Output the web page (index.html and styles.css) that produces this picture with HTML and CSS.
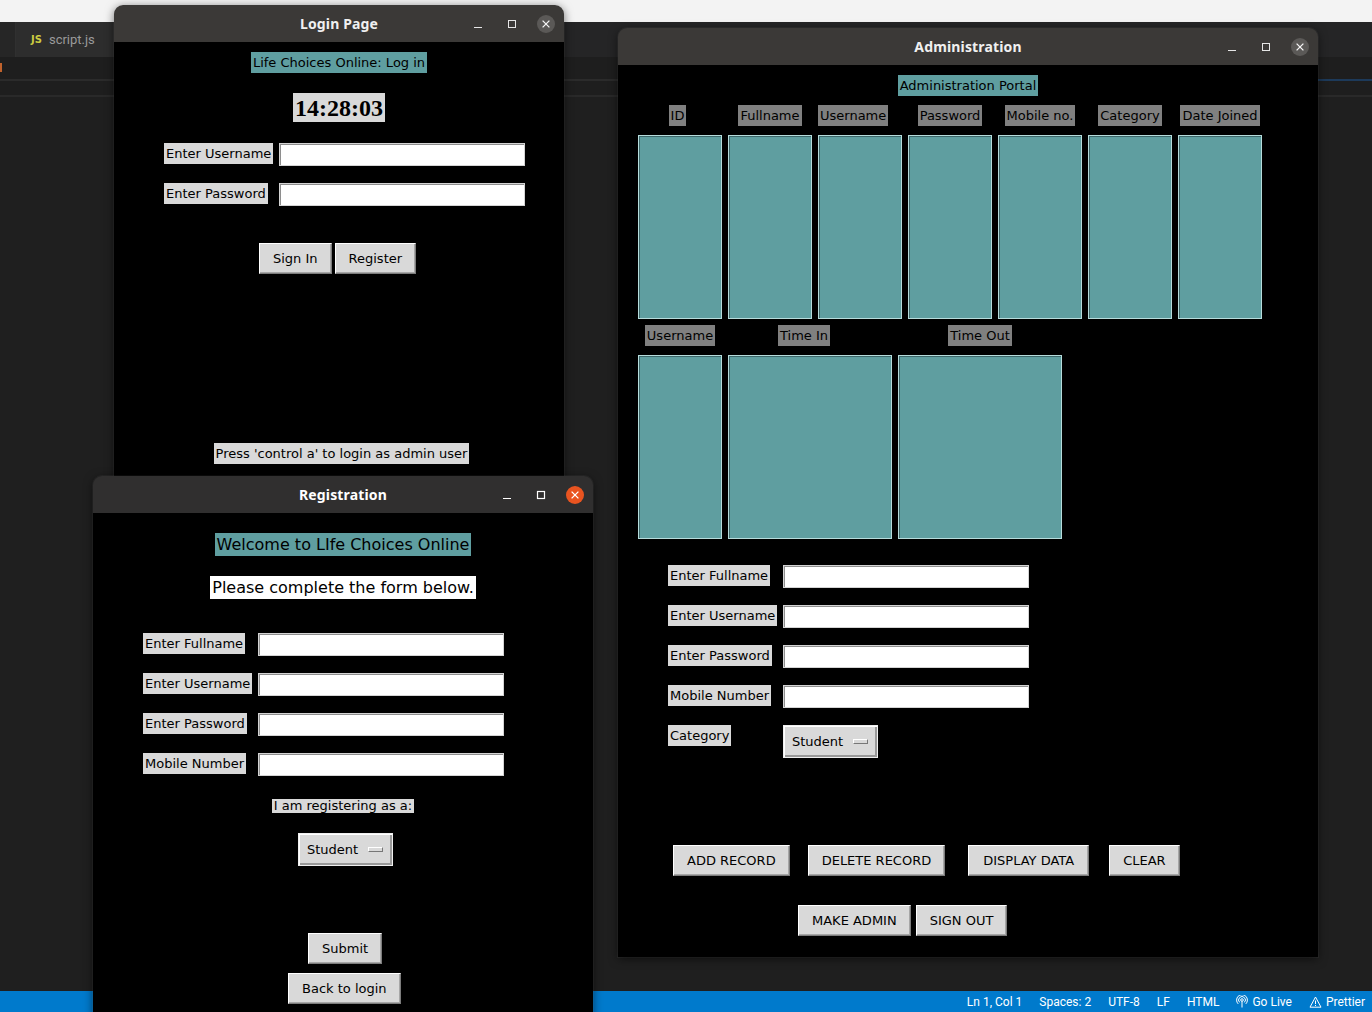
FILE: index.html
```html
<!DOCTYPE html>
<html lang="en">
<head>
<meta charset="utf-8">
<title>Life Choices Online</title>
<link rel="stylesheet" href="styles.css">
</head>
<body>
<div class="screen">
  <div class="topstrip"></div>
  <div class="tabbar">
    <div class="tab-lead"></div>
    <div class="tab"><span class="js">JS</span><span class="tabname">script.js</span></div>
  </div>
  <div class="crumbs"><span class="dirty"></span></div>
  <div class="rule"></div>
  <div class="crumbs2"></div>
  <div class="rule rule2"></div>
  <div class="editor"></div>
  <div class="statusbar">
    <span>Ln 1, Col 1</span>
    <span>Spaces: 2</span>
    <span>UTF-8</span>
    <span>LF</span>
    <span>HTML</span>
    <span class="sb-icon"><svg width="12" height="13" viewBox="0 0 12 13" fill="none" stroke="#fff" stroke-width="1"><circle cx="6" cy="5" r="1.3"/><path d="M3.6 7.4a3.4 3.4 0 1 1 4.8 0"/><path d="M2.2 8.9a5.4 5.4 0 1 1 7.6 0"/><path d="M6 6.3v6.2"/></svg>Go Live</span>
    <span class="sb-icon"><svg width="13" height="12" viewBox="0 0 13 12" fill="none" stroke="#fff" stroke-width="1"><path d="M6.5 1 L12 11.2 H1 Z"/><path d="M6.5 4.5v3.6M6.5 9v1"/></svg>Prettier</span>
  </div>

  <section class="window win-login">
    <header class="titlebar">
      <span></span>
      <h1 class="wtitle">Login Page</h1>
      <div class="controls">
        <svg class="ctl" viewBox="0 0 24 24"><path d="M8 15.5H16" stroke="#e6e6e6" stroke-width="1"/></svg>
        <svg class="ctl" viewBox="0 0 24 24"><rect x="8.5" y="8.5" width="7" height="7" fill="none" stroke="#e6e6e6" stroke-width="1"/></svg>
        <svg class="ctl" viewBox="0 0 24 24"><circle cx="12" cy="12" r="9" fill="#5b5957"/><path d="M8.6 8.6L15.4 15.4M15.4 8.6L8.6 15.4" stroke="#f2f2f2" stroke-width="1.3"/></svg>
      </div>
    </header>
    <div class="content login-content">
      <div class="lbl teal mt10">Life Choices Online: Log in</div>
      <div class="clock">14:28:03</div>
      <div class="frow mt21">
        <div class="lbl">Enter Username</div>
        <div class="entry"></div>
      </div>
      <div class="frow mt17">
        <div class="lbl">Enter Password</div>
        <div class="entry"></div>
      </div>
      <div class="login-btns">
        <button class="btn">Sign In</button>
        <button class="btn">Register</button>
      </div>
      <div class="lbl press">Press 'control a' to login as admin user</div>
    </div>
  </section>

  <section class="window win-admin">
    <header class="titlebar">
      <span></span>
      <h1 class="wtitle">Administration</h1>
      <div class="controls">
        <svg class="ctl" viewBox="0 0 24 24"><path d="M8 15.5H16" stroke="#e6e6e6" stroke-width="1"/></svg>
        <svg class="ctl" viewBox="0 0 24 24"><rect x="8.5" y="8.5" width="7" height="7" fill="none" stroke="#e6e6e6" stroke-width="1"/></svg>
        <svg class="ctl" viewBox="0 0 24 24"><circle cx="12" cy="12" r="9" fill="#5b5957"/><path d="M8.6 8.6L15.4 15.4M15.4 8.6L8.6 15.4" stroke="#f2f2f2" stroke-width="1.3"/></svg>
      </div>
    </header>
    <div class="content admin-content">
      <div class="lbl teal mt10">Administration Portal</div>
      <div class="cols7 mt9">
        <div class="lbl gray idh">ID</div>
        <div class="lbl gray">Fullname</div>
        <div class="lbl gray start">Username</div>
        <div class="lbl gray">Password</div>
        <div class="lbl gray">Mobile no.</div>
        <div class="lbl gray">Category</div>
        <div class="lbl gray">Date Joined</div>
      </div>
      <div class="cols7 mt9">
        <div class="lb"></div><div class="lb"></div><div class="lb"></div><div class="lb"></div><div class="lb"></div><div class="lb"></div><div class="lb"></div>
      </div>
      <div class="cols3 mt6">
        <div class="lbl gray">Username</div>
        <div class="lbl gray timein">Time In</div>
        <div class="lbl gray">Time Out</div>
      </div>
      <div class="cols3 mt9">
        <div class="lb"></div><div class="lb"></div><div class="lb"></div>
      </div>
      <div class="frow mt26">
        <div class="lbl">Enter Fullname</div>
        <div class="entry"></div>
      </div>
      <div class="frow mt17">
        <div class="lbl">Enter Username</div>
        <div class="entry"></div>
      </div>
      <div class="frow mt17">
        <div class="lbl">Enter Password</div>
        <div class="entry"></div>
      </div>
      <div class="frow mt17">
        <div class="lbl">Mobile Number</div>
        <div class="entry"></div>
      </div>
      <div class="frow mt17">
        <div class="lbl">Category</div>
        <div class="optmenu"><span>Student</span><span class="ind"></span></div>
      </div>
      <div class="admin-btns1">
        <button class="btn">ADD RECORD</button>
        <button class="btn">DELETE RECORD</button>
        <button class="btn wide-gap">DISPLAY DATA</button>
        <button class="btn clear">CLEAR</button>
      </div>
      <div class="admin-btns2">
        <button class="btn">MAKE ADMIN</button>
        <button class="btn">SIGN OUT</button>
      </div>
    </div>
  </section>

  <section class="window win-reg active">
    <header class="titlebar">
      <span></span>
      <h1 class="wtitle">Registration</h1>
      <div class="controls">
        <svg class="ctl" viewBox="0 0 24 24"><path d="M8 15.5H16" stroke="#ffffff" stroke-width="1.2"/></svg>
        <svg class="ctl" viewBox="0 0 24 24"><rect x="8.5" y="8.5" width="7" height="7" fill="none" stroke="#ffffff" stroke-width="1.2"/></svg>
        <svg class="ctl" viewBox="0 0 24 24"><circle cx="12" cy="12" r="9" fill="#e95420"/><path d="M8.6 8.6L15.4 15.4M15.4 8.6L8.6 15.4" stroke="#ffffff" stroke-width="1.3"/></svg>
      </div>
    </header>
    <div class="content reg-content">
      <div class="lbl teal big mt20">Welcome to LIfe Choices Online</div>
      <div class="lbl white big mt20">Please complete the form below.</div>
      <div class="frow mt34">
        <div class="lbl">Enter Fullname</div>
        <div class="entry"></div>
      </div>
      <div class="frow mt17">
        <div class="lbl">Enter Username</div>
        <div class="entry"></div>
      </div>
      <div class="frow mt17">
        <div class="lbl">Enter Password</div>
        <div class="entry"></div>
      </div>
      <div class="frow mt17">
        <div class="lbl">Mobile Number</div>
        <div class="entry"></div>
      </div>
      <div class="lbl small">I am registering as a:</div>
      <div class="optmenu reg-opt"><span>Student</span><span class="ind"></span></div>
      <button class="btn submit">Submit</button>
      <button class="btn back">Back to login</button>
    </div>
  </section>
</div>
</body>
</html>
```

FILE: styles.css
```css
* { box-sizing: border-box; margin: 0; padding: 0; }

body {
  margin: 0;
  background: #1f1f1f;
  font-family: "DejaVu Sans", sans-serif;
}

.screen {
  position: relative;
  width: 1372px;
  height: 1012px;
  overflow: hidden;
  display: flex;
  flex-direction: column;
  background: #1f1f1f;
}

/* ---------- editor backdrop ---------- */
.topstrip { height: 22px; flex: none; background: #f3f3f3; }

.tabbar { height: 35px; flex: none; display: flex; background: #252526; }
.tab-lead { width: 16px; border-right: 1px solid #303030; background: #262626; }
.tab {
  width: 120px;
  display: flex;
  align-items: center;
  gap: 7px;
  padding-left: 15px;
  background: #2d2d2d;
}
.js { font: bold 10px "DejaVu Sans", sans-serif; color: #cbcb41; }
.tabname { font: 13px Roboto, sans-serif; color: #9a9a9a; }

.crumbs { height: 22px; flex: none; background: #1e1e1e; display: flex; }
.dirty { display: block; width: 2px; height: 9px; margin-top: 6px; background: #c0622c; }
.rule { height: 2px; flex: none; background: linear-gradient(to right, #2b2b2b 1318px, #1d3a5a 1318px); }
.crumbs2 { height: 14px; flex: none; background: #1e1e1e; }
.rule2 { background: #292929; }
.editor { flex: 1; background: #1f1f1f; }

.statusbar {
  height: 21px;
  flex: none;
  display: flex;
  justify-content: flex-end;
  align-items: center;
  gap: 17px;
  padding-right: 7px;
  background: #007acc;
  color: #ffffff;
  font: 12px Roboto, sans-serif;
}
.sb-icon { display: flex; align-items: center; gap: 4px; }

/* ---------- windows ---------- */
.window {
  position: absolute;
  display: flex;
  flex-direction: column;
  border-radius: 9px 9px 0 0;
  overflow: hidden;
  box-shadow: 0 2px 10px rgba(0, 0, 0, 0.55), 0 0 0 1px rgba(255, 255, 255, 0.05);
}
.win-login { left: 114px; top: 5px; width: 450px; }
.win-admin { left: 618px; top: 28px; width: 700px; }
.win-reg { left: 93px; top: 476px; width: 500px; }

.titlebar {
  height: 37px;
  flex: none;
  display: grid;
  grid-template-columns: 1fr auto 1fr;
  align-items: center;
  background: #3b3937;
}
.active .titlebar { background: #302f2f; }
.wtitle {
  font: bold 14px "Noto Sans", sans-serif;
  letter-spacing: 0.15px;
  color: #f0f0f0;
}
.active .wtitle { color: #ffffff; }
.controls { justify-self: end; display: flex; gap: 10px; padding-right: 6px; }
.ctl { width: 24px; height: 24px; display: block; }

.content {
  background: #000000;
  display: flex;
  flex-direction: column;
  align-items: center;
}
.login-content { height: 520px; }
.admin-content { height: 892px; }
.reg-content { height: 540px; }

/* ---------- tk widgets ---------- */
.lbl {
  font: 13px/15px "DejaVu Sans", sans-serif;
  color: #000000;
  background: #d9d9d9;
  padding: 3px 2px;
  white-space: nowrap;
}
.lbl.teal { background: #5f9ea0; }
.lbl.gray { background: #808080; }
.lbl.white { background: #ffffff; }
.lbl.big { font-size: 16px; line-height: 19px; padding: 2px 2px; }
.lbl.small {
  height: 14px;
  line-height: 14px;
  padding: 0 2px;
  overflow: hidden;
  margin-top: 23px;
}

.clock {
  margin-top: 20px;
  font: bold 24px/26px "Liberation Serif", serif;
  color: #000000;
  background: #d9d9d9;
  padding: 2px 2px 1px;
}

.entry {
  width: 246px;
  height: 23px;
  background: #ffffff;
  border: 1px solid #d4d4d4;
  box-shadow: inset 1px 1px 0 #8e8e8e;
}

.frow {
  align-self: stretch;
  display: grid;
  grid-template-columns: 115px 246px;
  align-items: start;
  padding-left: 50px;
}
.frow .lbl { justify-self: start; }

.btn {
  height: 31px;
  padding: 0 13px;
  font: 13px/15px "DejaVu Sans", sans-serif;
  color: #000000;
  background: #d9d9d9;
  border: 1px solid;
  border-color: #ffffff #7c7c7c #7c7c7c #ffffff;
  box-shadow: inset -1px -1px 0 #a6a6a6;
  white-space: nowrap;
}

.optmenu {
  display: flex;
  align-items: center;
  width: 95px;
  height: 33px;
  padding-left: 8px;
  font: 13px/15px "DejaVu Sans", sans-serif;
  color: #000000;
  background: #d9d9d9;
  border: 1px solid #efefef;
  box-shadow: inset 1px 1px 0 #ffffff, inset -2px -2px 0 #999999;
}
.ind {
  display: block;
  width: 15px;
  height: 5px;
  margin-left: 10px;
  background: #d9d9d9;
  border: 1px solid;
  border-color: #ffffff #777777 #777777 #ffffff;
}

.lb {
  height: 184px;
  background: #5f9ea0;
  border: 1px solid #b6dcdc;
  box-shadow: inset 1px 1px 0 #3b6668;
}

/* ---------- spacing helpers ---------- */
.mt6 { margin-top: 6px; }
.mt9 { margin-top: 9px; }
.mt10 { margin-top: 10px; }
.mt17 { margin-top: 17px; }
.mt20 { margin-top: 20px; }
.mt21 { margin-top: 21px; }
.mt26 { margin-top: 26px; }
.mt34 { margin-top: 34px; }

/* ---------- login ---------- */
.login-btns {
  align-self: flex-start;
  display: flex;
  gap: 3px;
  margin-top: 37px;
  margin-left: 145px;
}
.press { margin-top: 169px; margin-left: 5px; }

/* ---------- admin ---------- */
.cols7 {
  align-self: flex-start;
  margin-left: 20px;
  display: grid;
  grid-template-columns: repeat(7, 84px);
  column-gap: 6px;
}
.cols3 {
  align-self: flex-start;
  margin-left: 20px;
  display: grid;
  grid-template-columns: 84px 164px 164px;
  column-gap: 6px;
}
.cols7 .lbl, .cols3 .lbl { justify-self: center; }
.cols7 .lbl.idh { margin-right: 5px; }
.cols7 .lbl.start { justify-self: start; }
.cols3 .lbl.timein { justify-self: start; margin-left: 50px; }

.admin-btns1 {
  align-self: flex-start;
  display: flex;
  gap: 18px;
  margin-top: 87px;
  margin-left: 55px;
}
.admin-btns1 .wide-gap { margin-left: 5px; padding: 0 14px; }
.admin-btns1 .clear { margin-left: 2px; }
.admin-btns2 {
  align-self: flex-start;
  display: flex;
  gap: 5px;
  margin-top: 29px;
  margin-left: 180px;
}

/* ---------- registration ---------- */
.reg-opt { align-self: flex-start; margin-left: 205px; margin-top: 20px; }
.submit { align-self: flex-start; margin-left: 215px; margin-top: 67px; }
.back { align-self: flex-start; margin-left: 195px; margin-top: 9px; }
```
